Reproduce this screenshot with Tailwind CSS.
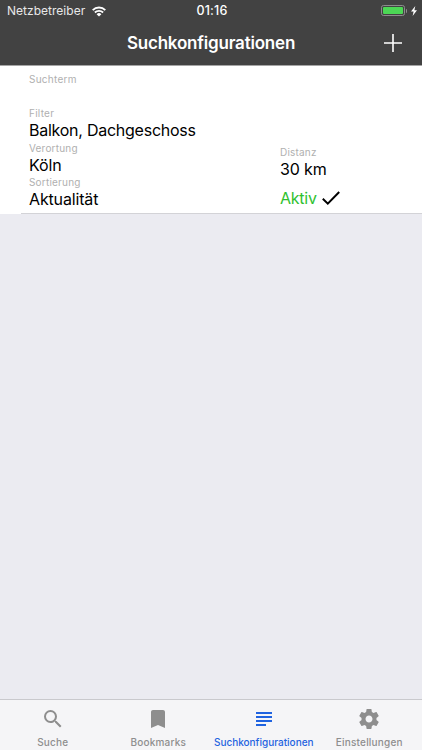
<!DOCTYPE html>
<html lang="de">
<head>
  <meta charset="UTF-8">
  <meta name="viewport" content="width=device-width, initial-scale=1.0">
  <title>Suchkonfigurationen</title>
  <script src="https://cdn.jsdelivr.net/npm/@tailwindcss/browser@4"></script>
</head>
<body class="h-screen flex flex-col overflow-hidden bg-[#ebebf1] font-['Inter',sans-serif]">
  <header class="h-[66px] shrink-0 bg-[#424242] text-white border-b border-[#a5a5a5]">
    <!-- Status bar -->
    <div class="h-[22px] grid grid-cols-3 items-center pl-[7px] pr-[5px] text-[12.5px] leading-[22px]">
      <div class="flex items-center gap-[7px]">
        <span class="text-[12px] text-[#e8e8e8] tracking-[0.02px]">Netzbetreiber</span>
        <svg class="w-[14px] h-[11px]" viewBox="0 0 14 11" fill="none" stroke="currentColor" stroke-width="1.9">
          <path d="M0.7 4.1a9 9 0 0 1 12.6 0M2.9 6.5a5.9 5.9 0 0 1 8.2 0" />
          <path d="M7 10.6 4.6 8.2a3.5 3.5 0 0 1 4.8 0z" fill="currentColor" stroke="none" />
        </svg>
      </div>
      <span class="text-center font-medium tracking-[0.2px]">01:16</span>
      <div class="flex items-center justify-end pb-px">
        <div class="w-6 h-[11px] rounded-[2.5px] border border-[#8c8c8c] p-px">
          <div class="h-full rounded-[1px] bg-[#4cd755]"></div>
        </div>
        <div class="w-[1.5px] h-1 ml-px rounded-r bg-[#8c8c8c]"></div>
        <svg class="w-[6px] h-[10px] ml-[4px]" viewBox="0 0 6 10" fill="currentColor"><path d="M4.3 0 0 5.6h2.6L1.6 10 6 4.2H3.4z" /></svg>
      </div>
    </div>
    <!-- Navigation bar -->
    <div class="h-[43px] grid grid-cols-[1fr_auto_1fr] items-center px-5">
      <h1 class="col-start-2 text-[17px] font-semibold leading-[43px] tracking-[-0.2px]">Suchkonfigurationen</h1>
      <svg class="justify-self-end w-[18px] h-[18px] mb-[2px]" viewBox="0 0 18 18" stroke="currentColor" stroke-width="1.6"><path d="M9 0v18M0 9h18" /></svg>
    </div>
  </header>

  <main class="flex-1">
    <div class="bg-white h-[148px] grid grid-cols-[251px_1fr] pl-[29px]">
      <dl class="pt-[6px]">
        <dt class="h-[14px] text-[10px] leading-[14px] tracking-[0.25px] text-[#b0b0b0]">Suchterm</dt>
        <dd class="h-[20px]"></dd>
        <dt class="h-[14px] text-[10px] leading-[14px] tracking-[0.25px] text-[#b0b0b0]">Filter</dt>
        <dd class="h-[20.5px] text-[16px] leading-[20px] tracking-[-0.25px]">Balkon, Dachgeschoss</dd>
        <dt class="h-[14px] text-[10px] leading-[14px] tracking-[0.2px] text-[#b0b0b0]">Verortung</dt>
        <dd class="h-[20.5px] text-[16px] leading-[20px] tracking-[-0.15px]">Köln</dd>
        <dt class="h-[14px] text-[10px] leading-[14px] tracking-[0.2px] text-[#b0b0b0]">Sortierung</dt>
        <dd class="h-[20px] text-[16px] leading-[20px] tracking-[-0.15px]">Aktualität</dd>
      </dl>
      <div class="pt-[79px]">
        <div class="h-[14px] text-[10px] leading-[14px] tracking-[0.2px] text-[#b0b0b0]">Distanz</div>
        <div class="text-[16px] leading-[20px] tracking-[-0.15px]">30 km</div>
        <div class="flex items-center gap-[5px] pt-[9px]">
          <span class="text-[16px] leading-[20px] tracking-[-0.25px] text-[#2fc12f]">Aktiv</span>
          <svg class="w-[18px] h-[14px]" viewBox="0 0 18 14" fill="none" stroke="black" stroke-width="2"><path d="M0.8 7.8 5.8 12.6 17.2 1" /></svg>
        </div>
      </div>
    </div>
    <div class="h-px ml-[21px] -mt-px bg-[#d3d3d7]"></div>
  </main>

  <!-- Tab bar -->
  <nav class="h-[51px] shrink-0 grid grid-cols-4 bg-[#f5f5f7] border-t border-[#c9c9cd] text-[#8e8e8e] text-[10px] font-medium leading-[14px] tracking-[0.2px]">
    <div class="flex flex-col items-center pt-[7px]">
      <svg class="w-6 h-6" viewBox="0 0 24 24" fill="currentColor"><path d="M15.5 14h-.79l-.28-.27A6.47 6.47 0 0 0 16 9.5 6.5 6.5 0 1 0 9.5 16c1.61 0 3.09-.59 4.23-1.57l.27.28v.79l5 4.99L20.49 19l-4.99-5zm-6 0C7.01 14 5 11.99 5 9.5S7.01 5 9.5 5 14 7.01 14 9.5 11.99 14 9.5 14z" /></svg>
      <span class="mt-1">Suche</span>
    </div>
    <div class="flex flex-col items-center pt-[7px]">
      <svg class="w-6 h-6" viewBox="0 0 24 24" fill="currentColor"><path d="M17 3H7c-1.1 0-1.99.9-1.99 2L5 21l7-3 7 3V5c0-1.1-.9-2-2-2z" /></svg>
      <span class="mt-1">Bookmarks</span>
    </div>
    <div class="flex flex-col items-center pt-[7px] text-[#1f63e0]">
      <svg class="w-6 h-6" viewBox="0 0 24 24" fill="currentColor"><path d="M14 17H4v2h10v-2zm6-8H4v2h16V9zM4 15h16v-2H4v2zM4 5v2h16V5H4z" /></svg>
      <span class="mt-1 tracking-[0px]">Suchkonfigurationen</span>
    </div>
    <div class="flex flex-col items-center pt-[7px]">
      <svg class="w-6 h-6" viewBox="0 0 24 24" fill="currentColor"><path d="M19.43 12.98c.04-.32.07-.64.07-.98s-.03-.66-.07-.98l2.11-1.65c.19-.15.24-.42.12-.64l-2-3.46c-.12-.22-.39-.3-.61-.22l-2.49 1c-.52-.4-1.08-.73-1.69-.98l-.38-2.65C14.46 2.18 14.25 2 14 2h-4c-.25 0-.46.18-.49.42l-.38 2.65c-.61.25-1.17.59-1.69.98l-2.49-1c-.23-.09-.49 0-.61.22l-2 3.46c-.13.22-.07.49.12.64l2.11 1.65c-.04.32-.07.65-.07.98s.03.66.07.98l-2.11 1.65c-.19.15-.24.42-.12.64l2 3.46c.12.22.39.3.61.22l2.49-1c.52.4 1.08.73 1.69.98l.38 2.65c.03.24.24.42.49.42h4c.25 0 .46-.18.49-.42l.38-2.65c.61-.25 1.17-.59 1.69-.98l2.49 1c.23.09.49 0 .61-.22l2-3.46c.12-.22.07-.49-.12-.64l-2.11-1.65zM12 15.5c-1.93 0-3.5-1.57-3.5-3.5s1.57-3.5 3.5-3.5 3.5 1.57 3.5 3.5-1.57 3.5-3.5 3.5z" /></svg>
      <span class="mt-1">Einstellungen</span>
    </div>
  </nav>
</body>
</html>
